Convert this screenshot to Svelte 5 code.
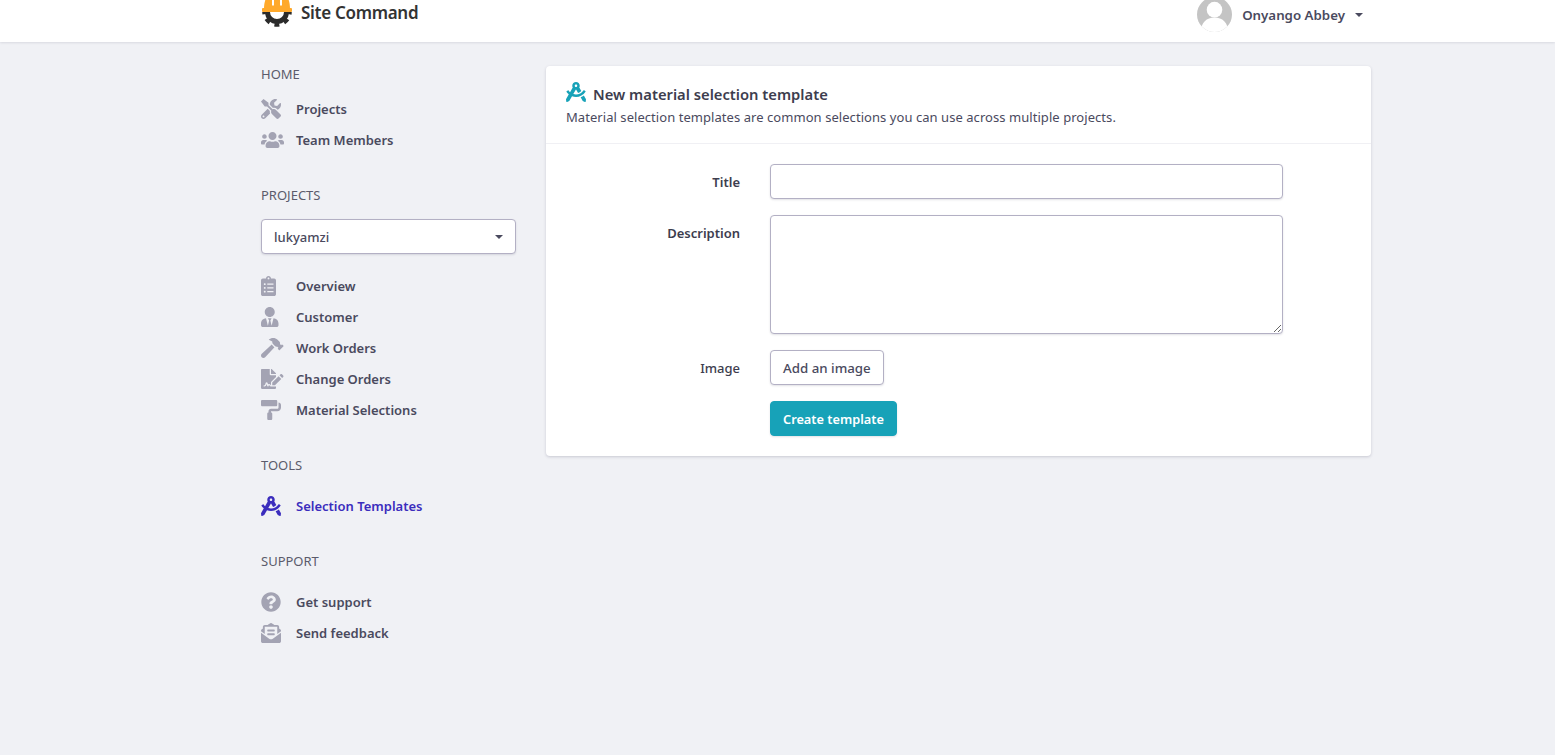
<script>
  const icons = {
    tools: [512, "M501.1 395.7L384 278.6c-23.1-23.1-57.6-27.6-85.4-13.9L192 158.1V96L64 0 0 64l96 128h62.1l106.6 106.6c-13.6 27.8-9.2 62.3 13.9 85.4l117.1 117.1c14.6 14.6 38.2 14.6 52.7 0l52.7-52.7c14.5-14.6 14.5-38.2 0-52.7zM331.7 225c28.3 0 54.9 11 74.9 31l19.4 19.4c15.8-6.9 30.8-16.5 43.8-29.5 37.1-37.1 49.7-89.3 37.9-136.7-2.2-9-13.5-12.1-20.1-5.5l-74.4 74.4-67.9-11.3L334 98.9l74.4-74.4c6.6-6.6 3.4-17.9-5.7-20.2-47.4-11.7-99.6.9-136.6 37.9-28.5 28.5-41.9 66.1-41.2 103.6l82.1 82.1c8.1-1.9 16.5-2.9 24.7-2.9zm-103.9 82l-56.7-56.7L18.7 402.8c-25 25-25 65.5 0 90.5s65.5 25 90.5 0l123.6-123.6c-7.6-19.9-9.9-41.6-5-62.7zM64 472c-13.2 0-24-10.8-24-24 0-13.3 10.7-24 24-24s24 10.7 24 24c0 13.2-10.7 24-24 24z"],
    users: [640, "M96 224c35.3 0 64-28.7 64-64s-28.7-64-64-64-64 28.7-64 64 28.7 64 64 64zm448 0c35.3 0 64-28.7 64-64s-28.7-64-64-64-64 28.7-64 64 28.7 64 64 64zm32 32h-64c-17.6 0-33.5 7.1-45.1 18.6 40.3 22.1 68.9 62 75.1 109.4h66c17.7 0 32-14.3 32-32v-32c0-35.3-28.7-64-64-64zm-256 0c61.9 0 112-50.1 112-112S381.9 32 320 32 208 82.1 208 144s50.1 112 112 112zm76.8 32h-8.3c-20.8 10-43.9 16-68.5 16s-47.6-6-68.5-16h-8.3C179.6 288 128 339.6 128 403.2V432c0 26.5 21.5 48 48 48h288c26.5 0 48-21.5 48-48v-28.8c0-63.6-51.6-115.2-115.2-115.2zm-223.7-13.4C161.5 263.1 145.6 256 128 256H64c-35.3 0-64 28.7-64 64v32c0 17.7 14.3 32 32 32h65.9c6.3-47.4 34.9-87.3 75.2-109.4z"],
    clipboard: [384, "M336 64h-80c0-35.3-28.7-64-64-64s-64 28.7-64 64H48C21.5 64 0 85.5 0 112v352c0 26.5 21.5 48 48 48h288c26.5 0 48-21.5 48-48V112c0-26.5-21.5-48-48-48zM96 424c-13.3 0-24-10.7-24-24s10.7-24 24-24 24 10.7 24 24-10.7 24-24 24zm0-96c-13.3 0-24-10.7-24-24s10.7-24 24-24 24 10.7 24 24-10.7 24-24 24zm0-96c-13.3 0-24-10.7-24-24s10.7-24 24-24 24 10.7 24 24-10.7 24-24 24zm96-192c13.3 0 24 10.7 24 24s-10.7 24-24 24-24-10.7-24-24 10.7-24 24-24zm128 368c0 4.4-3.6 8-8 8H168c-4.4 0-8-3.6-8-8v-16c0-4.4 3.6-8 8-8h144c4.4 0 8 3.6 8 8v16zm0-96c0 4.4-3.6 8-8 8H168c-4.4 0-8-3.6-8-8v-16c0-4.4 3.6-8 8-8h144c4.4 0 8 3.6 8 8v16zm0-96c0 4.4-3.6 8-8 8H168c-4.4 0-8-3.6-8-8v-16c0-4.4 3.6-8 8-8h144c4.4 0 8 3.6 8 8v16z"],
    tie: [448, "M224 256c70.7 0 128-57.3 128-128S294.7 0 224 0 96 57.3 96 128s57.3 128 128 128zm95.8 32.6L272 480l-32-136 32-56h-96l32 56-32 136-47.8-191.4C56.9 292 0 350.3 0 422.4V464c0 26.5 21.5 48 48 48h352c26.5 0 48-21.5 48-48v-41.6c0-72.1-56.9-130.4-128.2-133.8z"],
    hammer: [576, "M571.31 193.94l-22.63-22.63c-6.25-6.25-16.38-6.25-22.63 0l-11.31 11.31-28.9-28.9c5.63-21.31.36-44.9-16.35-61.61l-45.25-45.25c-62.48-62.48-163.79-62.48-226.28 0l90.51 45.25v18.75c0 16.97 6.74 33.25 18.75 45.25l49.14 49.14c16.71 16.71 40.3 21.98 61.61 16.35l28.9 28.9-11.31 11.31c-6.25 6.25-6.25 16.38 0 22.63l22.63 22.63c6.25 6.25 16.38 6.25 22.63 0l90.51-90.51c6.23-6.24 6.23-16.37-.02-22.62zm-286.72-15.2c-3.7-3.7-6.84-7.79-9.85-11.95L19.64 404.96c-25.57 23.88-26.26 64.19-1.53 88.93s65.05 24.05 88.93-1.53l238.13-255.07c-3.96-2.91-7.9-5.87-11.44-9.41l-49.14-49.14z"],
    signature: [576, "M218.17 424.14c-2.95-5.92-8.09-6.52-10.17-6.52s-7.22.59-10.02 6.19l-7.67 15.34c-6.37 12.78-25.03 11.37-29.48-2.09L144 386.59l-10.61 31.88c-5.89 17.66-22.38 29.53-41 29.53H80c-8.84 0-16-7.16-16-16s7.16-16 16-16h12.39c4.83 0 9.11-3.08 10.64-7.66l18.19-54.64c3.3-9.81 12.44-16.41 22.78-16.41s19.48 6.59 22.77 16.41l13.88 41.64c19.75-16.19 54.06-9.7 66 14.16 1.89 3.78 5.49 5.95 9.36 6.26v-82.12l128-127.09V160H248c-13.2 0-24-10.8-24-24V0H24C10.7 0 0 10.7 0 24v464c0 13.3 10.7 24 24 24h336c13.3 0 24-10.7 24-24v-40l-128-.11c-16.12-.31-30.58-9.28-37.83-23.75zM384 121.9c0-6.3-2.5-12.4-7-16.9L279.1 7c-4.5-4.5-10.6-7-17-7H256v128h128v-6.1zm-96 225.06V416h68.99l161.68-162.78-67.88-67.88L288 346.96zm280.54-179.63l-31.87-31.87c-9.94-9.94-26.07-9.94-36.01 0l-27.25 27.25 67.88 67.88 27.25-27.25c9.95-9.94 9.95-26.07 0-36.01z"],
    roller: [512, "M416 128V32c0-17.67-14.33-32-32-32H32C14.33 0 0 14.33 0 32v96c0 17.67 14.33 32 32 32h352c17.67 0 32-14.33 32-32zm32-64v128c0 17.67-14.33 32-32 32H256c-35.35 0-64 28.65-64 64v32c-17.67 0-32 14.33-32 32v128c0 17.67 14.33 32 32 32h64c17.67 0 32-14.33 32-32V352c0-17.67-14.33-32-32-32v-32h160c53.02 0 96-42.98 96-96v-64c0-35.35-28.65-64-64-64z"],
    compass: [512, "M457.01 344.42c-25.05 20.33-52.63 37.18-82.54 49.05l54.38 94.19 53.95 23.04c9.81 4.19 20.89-2.21 22.17-12.8l7.02-58.25-54.98-95.23zm42.49-94.56c4.86-7.67 1.89-17.99-6.05-22.39l-28.07-15.57c-7.48-4.15-16.61-1.46-21.26 5.72C403.01 281.15 332.25 320 256 320c-23.93 0-47.23-4.25-69.41-11.53l67.36-116.68c.7.02 1.34.21 2.04.21s1.35-.19 2.04-.21l51.09 88.5c31.23-8.96 59.56-25.75 82.61-48.92l-51.79-89.71C347.39 128.03 352 112.63 352 96c0-53.02-42.98-96-96-96s-96 42.98-96 96c0 16.63 4.61 32.03 12.05 45.66l-68.3 118.31c-12.55-11.61-23.96-24.59-33.68-39-4.79-7.1-13.97-9.62-21.38-5.33l-27.75 16.07c-7.85 4.54-10.63 14.9-5.64 22.47 15.57 23.64 34.69 44.21 55.98 62.02L0 439.66l7.02 58.25c1.28 10.59 12.36 16.99 22.17 12.8l53.95-23.04 70.8-122.63C186.13 377.55 220.62 384 256 384c99.05 0 190.88-51.01 243.5-134.14zM256 64c17.67 0 32 14.33 32 32s-14.33 32-32 32-32-14.33-32-32 14.33-32 32-32z"],
    question: [512, "M504 256c0 136.997-111.043 248-248 248S8 392.997 8 256C8 119.083 119.043 8 256 8s248 111.083 248 248zM262.655 90c-54.497 0-89.255 22.957-116.549 63.758-3.536 5.286-2.353 12.415 2.715 16.258l34.699 26.31c5.205 3.947 12.621 3.008 16.665-2.122 17.864-22.658 30.113-35.797 57.303-35.797 20.429 0 45.698 13.148 45.698 32.958 0 14.976-12.363 22.667-32.534 33.976C247.128 238.528 216 254.941 216 296v4c0 6.627 5.373 12 12 12h56c6.627 0 12-5.373 12-12v-1.333c0-28.462 83.186-29.647 83.186-106.667 0-58.002-60.165-102-116.531-102zM256 338c-25.365 0-46 20.635-46 46 0 25.364 20.635 46 46 46s46-20.636 46-46c0-25.365-20.635-46-46-46z"],
    envelope: [512, "M176 216h160c8.84 0 16-7.16 16-16v-16c0-8.84-7.16-16-16-16H176c-8.84 0-16 7.16-16 16v16c0 8.84 7.16 16 16 16zm-16 80c0 8.84 7.16 16 16 16h160c8.84 0 16-7.16 16-16v-16c0-8.84-7.16-16-16-16H176c-8.84 0-16 7.16-16 16v16zm96 121.13c-16.42 0-32.84-5.06-46.86-15.19L0 250.86V464c0 26.51 21.49 48 48 48h416c26.51 0 48-21.49 48-48V250.86L302.86 401.94c-14.02 10.12-30.44 15.19-46.86 15.19zm237.61-254.18c-8.85-6.94-17.24-13.47-29.61-22.81V96c0-26.51-21.49-48-48-48h-77.55c-3.04-2.2-5.87-4.26-9.04-6.56C312.6 29.17 279.2-.35 256 0c-23.2-.35-56.59 29.17-73.41 41.44-3.17 2.3-6 4.36-9.04 6.56H96c-26.51 0-48 21.49-48 48v44.14c-12.37 9.33-20.76 15.87-29.61 22.81A47.995 47.995 0 0 0 0 200.72v10.65l96 69.35V96h320v184.72l96-69.35v-10.65c0-14.74-6.78-28.67-18.39-37.77z"]
  };

  const home = [
    {label: "Projects", icon: "tools"},
    {label: "Team Members", icon: "users"}
  ];
  const project = [
    {label: "Overview", icon: "clipboard"},
    {label: "Customer", icon: "tie"},
    {label: "Work Orders", icon: "hammer"},
    {label: "Change Orders", icon: "signature"},
    {label: "Material Selections", icon: "roller"}
  ];
  const tools = [{label: "Selection Templates", icon: "compass", active: true}];
  const support = [
    {label: "Get support", icon: "question"},
    {label: "Send feedback", icon: "envelope"}
  ];
</script>

{#snippet navList(items)}
  <ul>
    {#each items as item}
      <li class:active={item.active}>
        <svg class="nav-icon" viewBox="0 0 {icons[item.icon][0]} 512" preserveAspectRatio="xMinYMid meet"><path d={icons[item.icon][1]} /></svg>
        <span>{item.label}</span>
      </li>
    {/each}
  </ul>
{/snippet}

<header>
  <div class="bar">
    <div class="brand">
      <svg class="logo" viewBox="0 0 32 38">
        <defs>
          <clipPath id="gear-clip"><rect x="0" y="23" width="32" height="15" /></clipPath>
        </defs>
        <g clip-path="url(#gear-clip)" fill="none" stroke="#2b2b2b">
          <circle cx="16" cy="23" r="9.500" stroke-width="5" />
          <circle cx="16" cy="23" r="13" stroke-width="3.500" stroke-dasharray="5 5.210" stroke-dashoffset="2.500" />
        </g>
        <path fill="#ffa92b" d="M3 20C3 10 7 4 11 3V16.500H13V2H19V16.500H21V3C25 4 29 10 29 20z" />
        <rect x="1" y="19" width="30" height="4" rx="1" fill="#ffa92b" />
      </svg>
      <span>Site Command</span>
    </div>
    <div class="user">
      <svg class="avatar" viewBox="0 0 36 36">
        <clipPath id="avatar-clip"><circle cx="18" cy="18" r="18" /></clipPath>
        <g clip-path="url(#avatar-clip)">
          <rect width="36" height="36" fill="#c4c4c4" />
          <circle cx="18" cy="13" r="8" fill="#fff" />
          <path fill="#fff" d="M4 36c0-10 6-15 14-15S32 26 32 36z" />
        </g>
      </svg>
      <span>Onyango Abbey</span>
      <i class="caret"></i>
    </div>
  </div>
</header>

<div class="page">
  <aside>
    <h6>HOME</h6>
    {@render navList(home)}

    <h6 class="projects">PROJECTS</h6>
    <div class="select">lukyamzi<i class="caret"></i></div>
    {@render navList(project)}

    <h6 class="tools">TOOLS</h6>
    {@render navList(tools)}

    <h6 class="tools">SUPPORT</h6>
    {@render navList(support)}
  </aside>

  <main>
    <div class="card">
      <div class="card-head">
        <h2>
          <svg viewBox="0 0 512 512"><path d={icons.compass[1]} /></svg>
          New material selection template
        </h2>
        <p>Material selection templates are common selections you can use across multiple projects.</p>
      </div>
      <form class="card-body">
        <label for="title">Title</label>
        <input id="title" type="text" />
        <label for="description">Description</label>
        <textarea id="description"></textarea>
        <label for="image" class="centered">Image</label>
        <div><button id="image" type="button" class="btn">Add an image</button></div>
        <div class="submit"><button type="button" class="btn primary">Create template</button></div>
      </form>
    </div>
  </main>
</div>

<style>
  :global(body) {
    background: #f0f1f5;
    font-family: "Noto Sans", "Open Sans", sans-serif;
    font-size: 14px;
    color: #3d3d4e;
  }
  * {
    box-sizing: border-box;
  }
  header {
    height: 42px;
    background: #fff;
    box-shadow: 0 1px 2px rgba(60, 60, 90, 0.12);
    overflow: hidden;
  }
  .bar {
    width: 1110px;
    margin-left: 261px;
    height: 42px;
    display: flex;
    justify-content: space-between;
    align-items: flex-end;
    padding-bottom: 6px;
  }
  .brand {
    display: flex;
    align-items: flex-end;
    gap: 8px;
    font-size: 17px;
    font-weight: 600;
    color: #333;
    letter-spacing: -0.3px;
  }
  .brand span {
    line-height: 24px;
    margin-bottom: 11px;
  }
  .logo {
    width: 32px;
    height: 38px;
    margin-bottom: 9px;
  }
  .user {
    display: flex;
    align-items: center;
    font-size: 13.3px;
    font-weight: 600;
    color: #4a4a5e;
    padding-right: 8px;
    margin-bottom: 4px;
  }
  .avatar {
    width: 35px;
    height: 35px;
    margin-right: 10px;
  }
  .caret {
    width: 0;
    height: 0;
    border: 4px solid transparent;
    border-top-color: currentColor;
    border-bottom: 0;
  }
  .user .caret {
    margin-left: 10px;
  }
  .page {
    width: 1110px;
    margin-left: 261px;
    display: flex;
    align-items: flex-start;
    gap: 30px;
  }
  aside {
    width: 255px;
    padding-top: 24px;
  }
  h6 {
    margin: -1px 0 0;
    font-size: 13px;
    line-height: 18px;
    font-weight: 400;
    color: #5b5b6b;
  }
  h6.projects {
    margin-top: 31px;
  }
  h6.tools {
    margin-top: 31px;
    margin-bottom: 16px;
  }
  ul {
    list-style: none;
    margin: 10px 0 0;
    padding: 0;
  }
  h6.tools + ul {
    margin-top: 0;
  }
  li {
    display: flex;
    align-items: center;
    height: 31px;
    font-size: 13px;
    font-weight: 600;
    color: #4a4a5e;
  }
  li.active {
    color: #3b2dbd;
  }
  .nav-icon {
    width: 23px;
    height: 20px;
    margin-right: 12px;
    fill: #a3a3b3;
    flex: none;
  }
  li.active .nav-icon {
    fill: #3b2dbd;
  }
  .select {
    margin-top: 15px;
    height: 35px;
    background: #fff;
    border: 1px solid #b3b0c4;
    border-radius: 4px;
    box-shadow: 0 1px 2px rgba(60, 60, 90, 0.15);
    display: flex;
    align-items: center;
    justify-content: space-between;
    padding: 0 12px;
    font-size: 13px;
    font-weight: 500;
    color: #4a4a5e;
  }
  .select + ul {
    margin-top: 16px;
  }
  main {
    flex: 1;
    padding-top: 24px;
  }
  .card {
    background: #fff;
    border-radius: 4px;
    box-shadow: 0 1px 3px rgba(60, 60, 90, 0.22);
  }
  .card-head {
    padding: 16px 20px 16px;
    border-bottom: 1px solid #f0f0f4;
  }
  h2 {
    margin: 0;
    display: flex;
    align-items: center;
    gap: 7px;
    font-size: 14.75px;
    line-height: 24px;
    font-weight: 600;
    color: #3d3d4e;
  }
  h2 svg {
    width: 20px;
    height: 20px;
    fill: #17a2b8;
    margin-top: -4px;
  }
  .card-head p {
    margin: 1px 0 0;
    font-size: 13px;
    line-height: 20px;
    letter-spacing: 0.055px;
    color: #4a4a5e;
  }
  .card-body {
    display: grid;
    grid-template-columns: 194px 513px;
    column-gap: 30px;
    row-gap: 16px;
    padding: 20px 0;
  }
  label {
    text-align: right;
    font-size: 13px;
    font-weight: 600;
    color: #3d3d4e;
    padding-top: 8px;
    line-height: 20px;
  }
  label.centered {
    font-weight: 500;
  }
  input,
  textarea {
    width: 513px;
    border: 1px solid #b3b0c4;
    border-radius: 4px;
    background: #fff;
    box-shadow: 0 1px 2px rgba(60, 60, 90, 0.15);
    display: block;
    margin: 0;
    font: inherit;
  }
  input {
    height: 35px;
  }
  textarea {
    height: 119px;
  }
  .btn {
    height: 35px;
    padding: 0 12px;
    border: 1px solid #b3b0c4;
    border-radius: 4px;
    background: #fff;
    box-shadow: 0 1px 2px rgba(60, 60, 90, 0.15);
    font: inherit;
    font-size: 13.3px;
    font-weight: 500;
    color: #4a4a5e;
  }
  .btn.primary {
    background: #17a2b8;
    border-color: #17a2b8;
    color: #fff;
    font-size: 12.75px;
    font-weight: 600;
  }
  .submit {
    grid-column: 2;
  }
</style>
